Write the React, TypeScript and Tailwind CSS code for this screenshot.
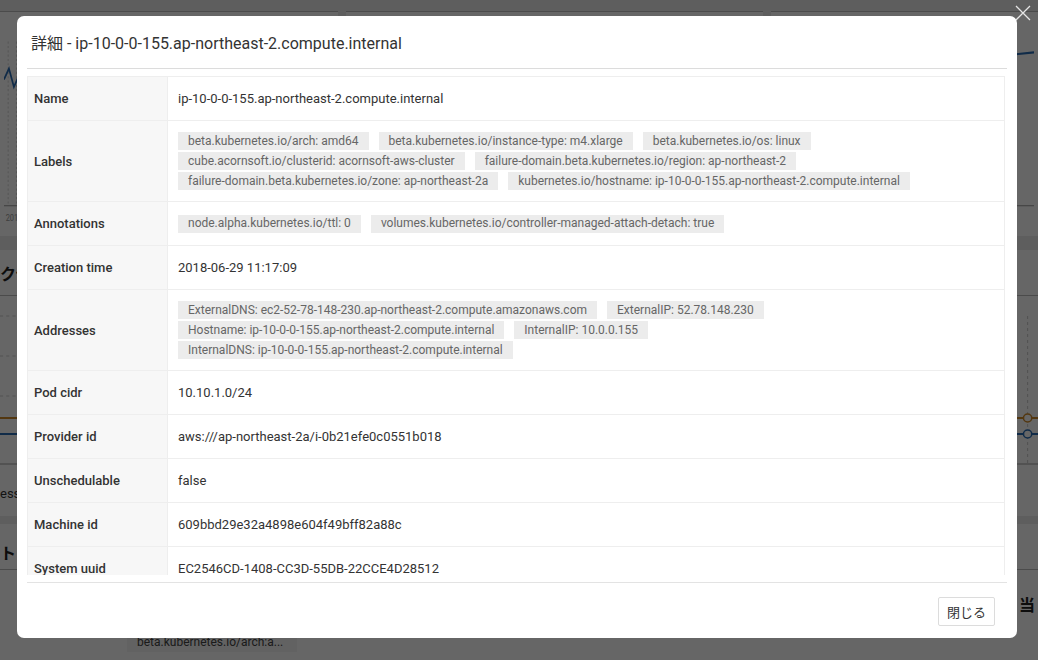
const labelChips = [
  "beta.kubernetes.io/arch: amd64",
  "beta.kubernetes.io/instance-type: m4.xlarge",
  "beta.kubernetes.io/os: linux",
  "cube.acornsoft.io/clusterid: acornsoft-aws-cluster",
  "failure-domain.beta.kubernetes.io/region: ap-northeast-2",
  "failure-domain.beta.kubernetes.io/zone: ap-northeast-2a",
  "kubernetes.io/hostname: ip-10-0-0-155.ap-northeast-2.compute.internal",
];

const annotationChips = [
  "node.alpha.kubernetes.io/ttl: 0",
  "volumes.kubernetes.io/controller-managed-attach-detach: true",
];

const addressChips = [
  "ExternalDNS: ec2-52-78-148-230.ap-northeast-2.compute.amazonaws.com",
  "ExternalIP: 52.78.148.230",
  "Hostname: ip-10-0-0-155.ap-northeast-2.compute.internal",
  "InternalIP: 10.0.0.155",
  "InternalDNS: ip-10-0-0-155.ap-northeast-2.compute.internal",
];

const rows: { name: string; value: string | string[] }[] = [
  { name: "Name", value: "ip-10-0-0-155.ap-northeast-2.compute.internal" },
  { name: "Labels", value: labelChips },
  { name: "Annotations", value: annotationChips },
  { name: "Creation time", value: "2018-06-29 11:17:09" },
  { name: "Addresses", value: addressChips },
  { name: "Pod cidr", value: "10.10.1.0/24" },
  { name: "Provider id", value: "aws:///ap-northeast-2a/i-0b21efe0c0551b018" },
  { name: "Unschedulable", value: "false" },
  { name: "Machine id", value: "609bbd29e32a4898e604f49bff82a88c" },
  { name: "System uuid", value: "EC2546CD-1408-CC3D-55DB-22CCE4D28512" },
  { name: "Boot id", value: "3f1c2a7e-5b0d-4c7e-9d2a-1e6b8f0c4a21" },
  { name: "Kernel version", value: "4.4.0-1061-aws" },
];

function Chart({ axis }: { axis: string }) {
  return (
    <svg className="w-full h-full" viewBox="0 0 400 200" preserveAspectRatio="none">
      {[5, 15, 90, 180, 270, 360].map((x) => (
        <line key={x} x1={x} y1="20" x2={x} y2="172" stroke="#ccc" strokeDasharray="2 2" />
      ))}
      <line x1="0" y1="172" x2="400" y2="172" stroke="#999" />
      <polyline points="0,55 6,45 12,62 20,48 40,52 80,50 400,30" fill="none" stroke="#2a6db5" strokeWidth="2" />
      <text x="2" y="186" fontSize="9" fill="#999">{axis}</text>
    </svg>
  );
}

function Backdrop() {
  return (
    <div className="h-[660px] w-full bg-[#ececec] overflow-hidden font-['Roboto',sans-serif]">
      <div className="grid grid-cols-[338px_417px_1fr] gap-x-[8px] h-[236px]">
        {["2018-06-38", "2018-06-30", "2018-08-01"].map((a) => (
          <div key={a} className="bg-white border-t border-[#bbb] mt-[11px] px-1 pt-2">
            <Chart axis={a} />
          </div>
        ))}
      </div>
      <div className="mt-[14px] bg-white">
        <div className="h-[46px] border-b border-[#bbb] flex items-center text-[16px] font-bold text-[#222] font-['Noto_Sans_CJK_JP',sans-serif]">
          ク使用量
        </div>
        <div className="h-[180px] grid grid-cols-2">
          <svg className="w-full h-full" viewBox="0 0 500 180" preserveAspectRatio="none">
            {[20, 60, 100].map((y) => (
              <line key={y} x1="0" y1={y} x2="500" y2={y} stroke="#ccc" strokeDasharray="3 3" />
            ))}
            <line x1="0" y1="122" x2="500" y2="122" stroke="#d08a2a" strokeWidth="2" />
            <line x1="0" y1="138" x2="500" y2="138" stroke="#2a6db5" strokeWidth="2" />
            <line x1="0" y1="168" x2="500" y2="168" stroke="#999" />
          </svg>
          <svg className="w-full h-full" viewBox="0 0 500 180" preserveAspectRatio="none">
            <line x1="490" y1="20" x2="490" y2="168" stroke="#ccc" strokeDasharray="3 3" />
            <line x1="0" y1="122" x2="500" y2="122" stroke="#d08a2a" strokeWidth="2" />
            <line x1="0" y1="138" x2="500" y2="138" stroke="#2a6db5" strokeWidth="2" />
            <circle cx="490" cy="122" r="4" fill="white" stroke="#d08a2a" strokeWidth="1.5" />
            <circle cx="490" cy="138" r="4" fill="white" stroke="#2a6db5" strokeWidth="1.5" />
            <line x1="0" y1="168" x2="500" y2="168" stroke="#999" />
          </svg>
        </div>
        <div className="h-[40px] text-[13px] text-[#333] pt-2">ess</div>
      </div>
      <div className="mt-[8px] bg-white h-[200px]">
        <div className="h-[46px] border-b border-[#bbb] flex items-center text-[16px] font-bold text-[#222] font-['Noto_Sans_CJK_JP',sans-serif] pt-[10px]">
          ト
        </div>
        <div className="flex justify-end pr-[3px] pt-[24px] text-[16px] leading-[20px] font-bold text-[#222] font-['Noto_Sans_CJK_JP',sans-serif]">
          当
        </div>
        <div className="mt-[18px] ml-[127px] w-[170px] h-[20px] bg-[#f5f5f5] text-[12px] text-[#444] px-[10px] flex items-center">
          beta.kubernetes.io/arch:a...
        </div>
      </div>
    </div>
  );
}

function Chip({ text }: { text: string }) {
  return (
    <span className="inline-flex items-center h-[18px] px-[10px] bg-[#ececec] text-[12px] text-[#666] whitespace-nowrap">
      {text}
    </span>
  );
}

export default function App() {
  return (
    <div className="relative w-[1038px] h-[660px] overflow-hidden">
      <Backdrop />
      <div className="absolute inset-0 bg-black/60" />

      <svg className="absolute top-[5px] right-[7px] w-[16px] h-[16px]" viewBox="0 0 16 16">
        <path d="M1 1 L15 15 M15 1 L1 15" stroke="#e5e5e5" strokeWidth="1.3" fill="none" />
      </svg>

      <div className="absolute left-[17px] top-[16px] w-[1000px] h-[622px] bg-white rounded-[7px] flex flex-col font-['Roboto','Noto_Sans_CJK_JP',sans-serif] text-[#333]">
        <div className="mx-[10px] h-[53px] border-b border-[#dcdcdc] pt-[18px] pl-[4px] text-[16px] leading-[20px]">
          詳細 - ip-10-0-0-155.ap-northeast-2.compute.internal
        </div>

        <div className="mx-[10px] mt-[7px] h-[499px] overflow-hidden pr-[2px]">
          <table className="w-full border-collapse border border-[#eee] text-[13px]">
            <tbody>
              {rows.map((r) => (
                <tr key={r.name} className="border-b border-[#eee]">
                  <td className="w-[140px] bg-[#f7f7f7] pl-[6px] py-[11px] align-middle font-medium leading-[21px] border-r border-[#eee]">
                    {r.name}
                  </td>
                  <td className="pl-[10px] pr-[24px] py-[11px] leading-[21px]">
                    {Array.isArray(r.value) ? (
                      <div className="flex flex-wrap items-center min-h-[21px] gap-x-[10px] gap-y-[2px]">
                        {r.value.map((c) => (
                          <Chip key={c} text={c} />
                        ))}
                      </div>
                    ) : (
                      r.value
                    )}
                  </td>
                </tr>
              ))}
            </tbody>
          </table>
        </div>

        <div className="mx-[10px] mt-[7px] border-t border-[#e3e3e3] flex justify-end pt-[14px] pr-[12px]">
          <button className="w-[57px] h-[29px] border border-[#dcdcdc] rounded-[2px] bg-white text-[13px] text-[#333] font-['Noto_Sans_CJK_JP',sans-serif]">
            閉じる
          </button>
        </div>
      </div>
    </div>
  );
}
